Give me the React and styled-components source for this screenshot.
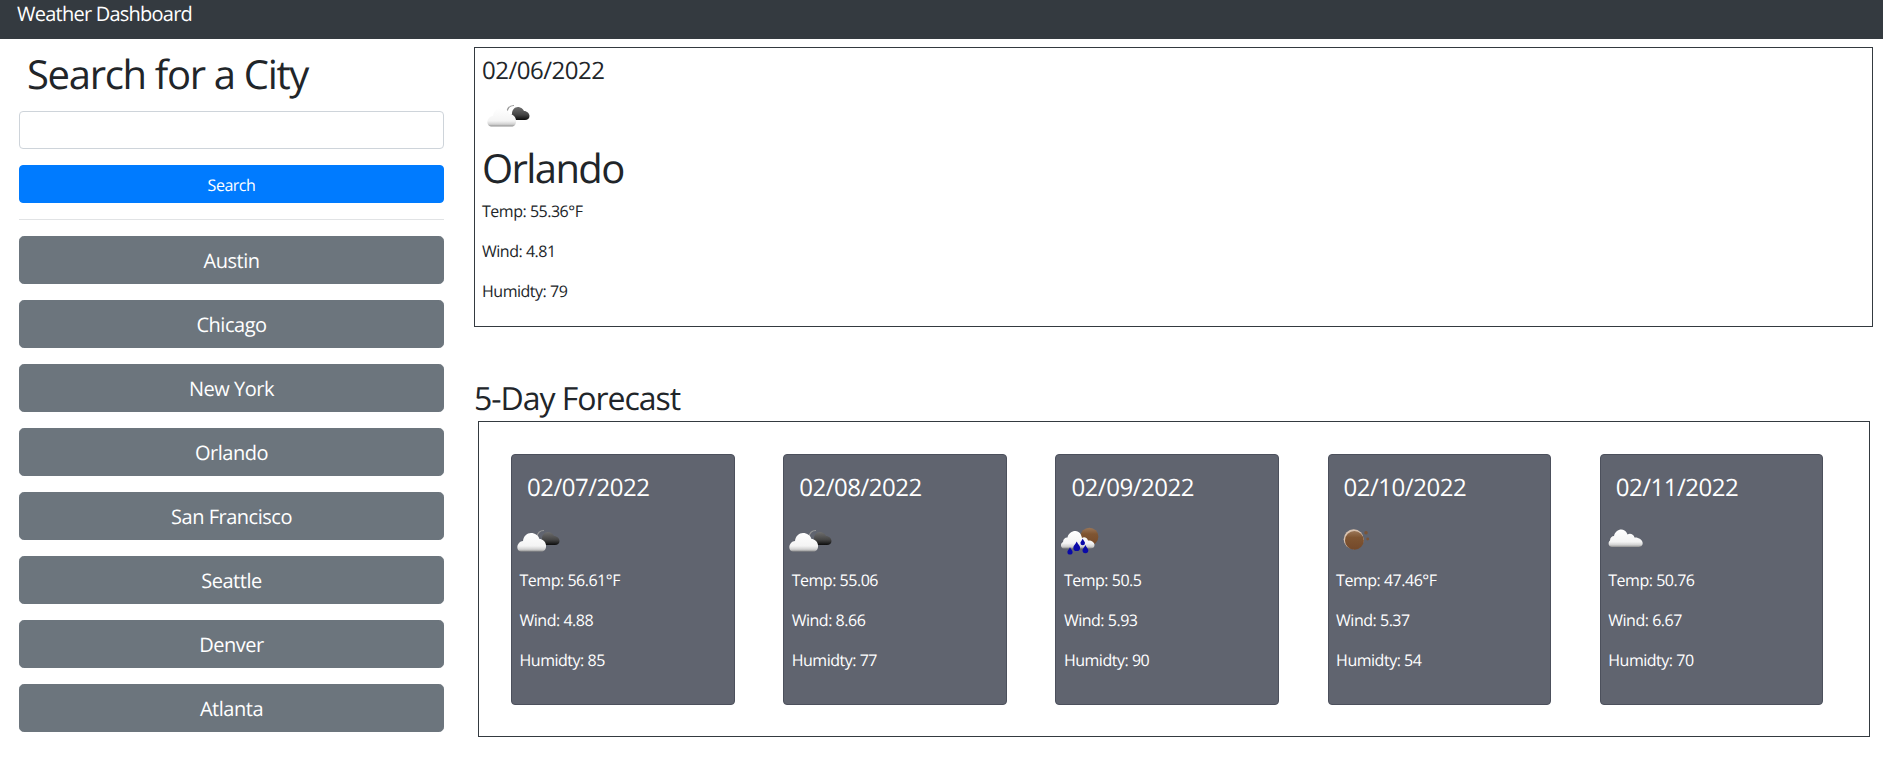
import React from 'react'
import styled, { createGlobalStyle } from 'styled-components'

const GlobalStyle = createGlobalStyle`
  html, body { margin: 0; padding: 0; background: #fff; }
  body {
    font-family: "Open Sans", "Noto Sans", sans-serif;
    font-size: 16px;
    color: #212529;
    letter-spacing: -0.03em;
    text-rendering: geometricPrecision;
  }
  * { box-sizing: border-box; }
`

const Nav = styled.nav`
  height: 39px;
  background: #343a40;
  color: #fff;
  font-size: 20px;
  line-height: 27px;
  padding-left: 17px;
  letter-spacing: -0.038em;
`

const Content = styled.div`
  display: flex;
  gap: 30px;
  padding: 8px 10px 0 19px;
`

const Sidebar = styled.aside`
  width: 425px;
  flex: none;
  display: flex;
  flex-direction: column;
`

const SearchTitle = styled.h1`
  margin: 3px 0 13px 8px;
  font-size: 40px;
  font-weight: 400;
  line-height: 48px;
  letter-spacing: -0.033em;
`

const SearchInput = styled.input`
  display: block;
  width: 100%;
  height: 38px;
  margin-bottom: 16px;
  border: 1px solid #ced4da;
  border-radius: 4px;
  background: #fff;
`

const SearchButton = styled.button`
  display: block;
  width: 100%;
  height: 38px;
  padding-top: 2px;
  border: 1px solid #007bff;
  border-radius: 4px;
  background: #007bff;
  color: #fff;
  font: inherit;
  letter-spacing: inherit;
  text-rendering: inherit;
`

const Divider = styled.hr`
  width: 100%;
  margin: 16px 0;
  border: 0;
  border-top: 1px solid #e1e3e5;
`

const CityList = styled.div`
  display: flex;
  flex-direction: column;
  gap: 16px;
`

const CityButton = styled.button`
  height: 48px;
  padding-top: 2px;
  border: 1px solid #6c757d;
  border-radius: 4.8px;
  background: #6c757d;
  color: #fff;
  font: inherit;
  font-size: 20px;
  letter-spacing: inherit;
  text-rendering: inherit;
`

const Main = styled.main`
  flex: 1;
  min-width: 0;
`

const CurrentBox = styled.section`
  height: 280px;
  border: 1px solid #343a40;
  padding: 8px 7px 0;
`

const DateText = styled.h4`
  margin: 0;
  font-size: 24px;
  font-weight: 400;
  line-height: 29px;
  padding-left: ${p => p.$inset || 0}px;
`

const IconSlot = styled.div`
  height: 50px;
  margin-top: 6px;
  padding-left: ${p => p.$inset || 0}px;
  svg { display: block; }
`

const CityName = styled.h2`
  margin: 3px 0 7px;
  font-size: 40px;
  font-weight: 400;
  line-height: 48px;
  letter-spacing: -0.04em;
`

const Reading = styled.p`
  margin: 0 0 16px;
  line-height: 24px;
  padding-left: ${p => p.$inset || 0}px;
`

const ForecastTitle = styled.h3`
  margin: 49px 0 0;
  font-size: 32px;
  font-weight: 400;
  line-height: 45px;
  letter-spacing: -0.032em;
`

const ForecastBox = styled.section`
  height: 316px;
  margin: 0 3px 0 4px;
  border: 1px solid #343a40;
  padding: 32px;
  display: flex;
  gap: 48.6px;
`

const DayCard = styled.article`
  width: 223.6px;
  height: 251px;
  flex: none;
  border: 1px solid #4c505c;
  border-radius: 4px;
  background: #60646f;
  color: #fff;
  padding-top: 18px;
`

const CardIcon = styled(IconSlot)`
  margin: 14px 0 2px;
`

const WeatherIcon = ({ kind }) => (
  <svg width="50" height="50" viewBox="0 0 50 50">
    <defs>
      <linearGradient id={`white-${kind}`} x1="0" y1="0" x2="0" y2="1">
        <stop offset="0" stopColor="#ffffff" />
        <stop offset="0.7" stopColor="#f4f4f4" />
        <stop offset="0.88" stopColor="#d2d2d2" />
        <stop offset="1" stopColor="#8f8f8f" />
      </linearGradient>
      <linearGradient id={`dark-${kind}`} x1="0" y1="0" x2="0" y2="1">
        <stop offset="0" stopColor="#6e6e6e" />
        <stop offset="0.6" stopColor="#444444" />
        <stop offset="1" stopColor="#0c0c0c" />
      </linearGradient>
      <linearGradient id={`sun-${kind}`} x1="0" y1="0" x2="0" y2="1">
        <stop offset="0" stopColor="#9a7658" />
        <stop offset="0.35" stopColor="#7f5532" />
        <stop offset="1" stopColor="#74492a" />
      </linearGradient>
    </defs>
    {kind === 'few' && (
      <g>
        <path d="M24 21 C24.5 17 27 14.5 31 14.5" fill="none" stroke="#999999" strokeWidth="1.2" />
        <path d="M30 29 C27.5 28.5 27 25 29 23 C29 18 33 15 37 16.5 C39 17 40.5 18.5 41 20 C44 20 46.5 22.5 46.5 25 C46.5 27.5 44.5 29 42 29 Z" fill={`url(#dark-${kind})`} />
        <path d="M8 35.5 C4.5 35.5 3.5 31 5 28.5 C6 26 8.5 25 10 25 C10.5 20 14 17 18 17 C22 17 25.5 19.5 26.5 23 C29.5 23 32.5 25.5 33 29 C33.5 33 31.5 35.5 28.5 35.5 Z" fill={`url(#white-${kind})`} />
      </g>
    )}
    {kind === 'rain' && (
      <g>
        <circle cx="32.4" cy="20.7" r="9" fill={`url(#sun-${kind})`} />
        <path d="M6.5 32.5 C3.5 32 3 27.5 6 26 C6 22.5 9 21 10.5 21.5 C11.5 16 18 13.5 21.5 16 C23.5 17 24.5 19.5 25 22 C27 20.5 30 21.5 31 24.5 C34 24 37.5 26 37.5 29 C37.5 31.5 36 32.5 33 32.5 Z" fill={`url(#white-${kind})`} />
        {[[13, 35.7, 2.6], [19.7, 31.3, 3.4], [25.7, 26.7, 2.3], [28.4, 34, 2.9]].map(([x, y, r]) => (
          <path key={x} d={`M${x} ${y - r * 1.7} C${x + r * 0.4} ${y - r * 0.8} ${x + r} ${y - r * 0.4} ${x + r} ${y + r * 0.1} A${r} ${r} 0 1 1 ${x - r} ${y + r * 0.1} C${x - r} ${y - r * 0.4} ${x - r * 0.4} ${y - r * 0.8} ${x} ${y - r * 1.7} Z`} fill="#0a0aa8" />
        ))}
      </g>
    )}
    {kind === 'sun' && (
      <g>
        <circle cx="23.7" cy="23.3" r="10" fill="#d9c3b0" />
        <circle cx="24.4" cy="24.4" r="9.4" fill={`url(#sun-${kind})`} />
        <circle cx="36" cy="16.7" r="1.8" fill="#7a5436" />
        <circle cx="37.7" cy="23" r="1.4" fill="#7a5436" />
      </g>
    )}
    {kind === 'cloud' && (
      <path d="M10 31 C6.5 31 5.5 26.5 8 24.5 C8 21.5 10 20 12 20 C13 15 18.5 12 22.5 14.5 C24 15.5 25 17 25.5 18.5 C28 17 31.5 18 32.5 21.5 C36 21 40.5 23.5 40.7 27 C40.7 30 38.5 31 36 31 Z" fill={`url(#white-${kind})`} />
    )}
  </svg>
)

const cities = ['Austin', 'Chicago', 'New York', 'Orlando', 'San Francisco', 'Seattle', 'Denver', 'Atlanta']

const forecast = [
  { date: '02/07/2022', kind: 'few', temp: '56.61°F', wind: '4.88', humidity: '85' },
  { date: '02/08/2022', kind: 'few', temp: '55.06', wind: '8.66', humidity: '77' },
  { date: '02/09/2022', kind: 'rain', temp: '50.5', wind: '5.93', humidity: '90' },
  { date: '02/10/2022', kind: 'sun', temp: '47.46°F', wind: '5.37', humidity: '54' },
  { date: '02/11/2022', kind: 'cloud', temp: '50.76', wind: '6.67', humidity: '70' },
]

const App = () => (
  <>
    <GlobalStyle />
    <Nav>Weather Dashboard</Nav>
    <Content>
      <Sidebar>
        <SearchTitle>Search for a City</SearchTitle>
        <SearchInput type="text" />
        <SearchButton>Search</SearchButton>
        <Divider />
        <CityList>
          {cities.map(city => <CityButton key={city}>{city}</CityButton>)}
        </CityList>
      </Sidebar>
      <Main>
        <CurrentBox>
          <DateText>02/06/2022</DateText>
          <IconSlot $inset={1}><WeatherIcon kind="few" /></IconSlot>
          <CityName>Orlando</CityName>
          <Reading>Temp: 55.36°F</Reading>
          <Reading>Wind: 4.81</Reading>
          <Reading>Humidty: 79</Reading>
        </CurrentBox>
        <ForecastTitle>5-Day Forecast</ForecastTitle>
        <ForecastBox>
          {forecast.map(day => (
            <DayCard key={day.date}>
              <DateText $inset={15}>{day.date}</DateText>
              <CardIcon $inset={1}><WeatherIcon kind={day.kind} /></CardIcon>
              <Reading $inset={7.5}>Temp: {day.temp}</Reading>
              <Reading $inset={7.5}>Wind: {day.wind}</Reading>
              <Reading $inset={7.5}>Humidty: {day.humidity}</Reading>
            </DayCard>
          ))}
        </ForecastBox>
      </Main>
    </Content>
  </>
)

export default App
